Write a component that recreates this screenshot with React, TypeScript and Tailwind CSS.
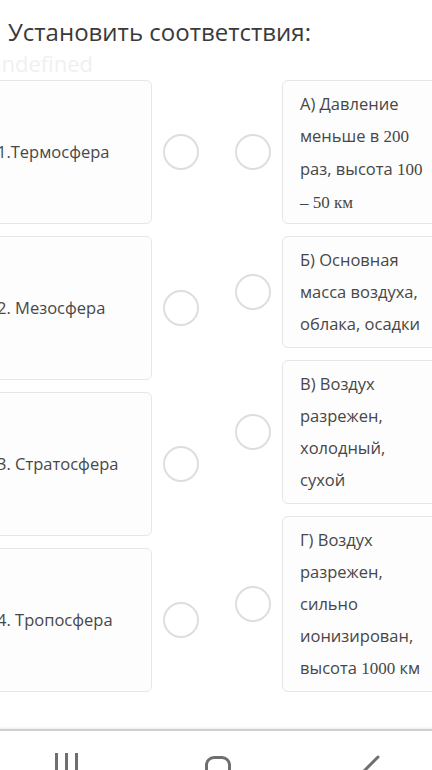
import React from "react";

const leftItems = ["1.Термосфера", "2. Мезосфера", "3. Стратосфера", "4. Тропосфера"];

const Serif = ({ children }: { children: React.ReactNode }) => (
  <span style={{ fontFamily: '"Liberation Serif", serif' }} className="text-[17px]">
    {children}
  </span>
);

const rightItems: { h: string; content: React.ReactNode }[] = [
  {
    h: "h-[144px]",
    content: (
      <>
        А) Давление меньше в <Serif>200</Serif> раз, высота <Serif>100</Serif>{" "}
        <Serif>– 50 км</Serif>
      </>
    ),
  },
  { h: "h-[112px]", content: <>Б) Основная масса воздуха, облака, осадки</> },
  { h: "h-[144px]", content: <>В) Воздух разрежен, холодный, сухой</> },
  {
    h: "h-[176px]",
    content: (
      <>
        Г) Воздух разрежен, сильно ионизирован, высота <Serif>1000</Serif> км
      </>
    ),
  },
];

function Circle() {
  return <div className="w-[36px] h-[36px] rounded-full border-[2.5px] border-[#dedede] bg-white shrink-0" />;
}

export default function App() {
  return (
    <div
      className="w-[432px] h-[770px] overflow-hidden bg-white relative flex flex-col"
      style={{ fontFamily: '"Open Sans", sans-serif' }}
    >
      <div className="pt-[14px] pl-[8px] text-[24px] leading-[36px] text-[#3a3a3a] whitespace-nowrap">
        Установить соответствия:
      </div>
      <div className="ml-[-12px] text-[22px] leading-[26px] text-[#f0f0f0] whitespace-nowrap">undefined</div>
      <div className="mt-[4px] ml-[-12px] flex text-[16.5px] text-[#474747]">
        <div className="flex flex-col gap-3">
          {leftItems.map((t) => (
            <div key={t} className="flex items-center h-[144px]">
              <div className="w-[164px] h-[144px] rounded-[6px] border-[1.5px] border-[#e6e6e6] bg-[#fdfdfd] flex items-center pl-[8px] whitespace-nowrap">
                {t}
              </div>
              <div className="ml-[11px]">
                <Circle />
              </div>
            </div>
          ))}
        </div>
        <div className="ml-[36px] flex flex-col gap-3">
          {rightItems.map((r, i) => (
            <div key={i} className={`flex items-center ${r.h}`}>
              <Circle />
              <div
                className={`ml-[11px] w-[164px] ${r.h} rounded-[6px] border-[1.5px] border-[#e6e6e6] bg-[#fdfdfd] pl-[17px] pr-[12px] py-[7px] leading-[32px]`}
              >
                {r.content}
              </div>
            </div>
          ))}
        </div>
      </div>
      <div className="mt-[37px] border-t-2 border-[#cfcfcf] shadow-[0_-1px_2px_rgba(0,0,0,0.08)] flex-1 bg-white relative">
        <div className="absolute left-[55px] top-[22px] flex gap-[7px]">
          <div className="w-[3px] h-[20px] bg-[#6f6f6f]" />
          <div className="w-[3px] h-[20px] bg-[#6f6f6f]" />
          <div className="w-[3px] h-[20px] bg-[#6f6f6f]" />
        </div>
        <div className="absolute left-[205px] top-[25px] w-[26px] h-[26px] rounded-[9px] border-[3px] border-[#6f6f6f]" />
        <svg className="absolute left-[355px] top-[24px]" width="30" height="30" viewBox="0 0 30 30">
          <path d="M23 2 L9 16" stroke="#6f6f6f" strokeWidth="3" fill="none" strokeLinecap="round" />
        </svg>
      </div>
    </div>
  );
}
